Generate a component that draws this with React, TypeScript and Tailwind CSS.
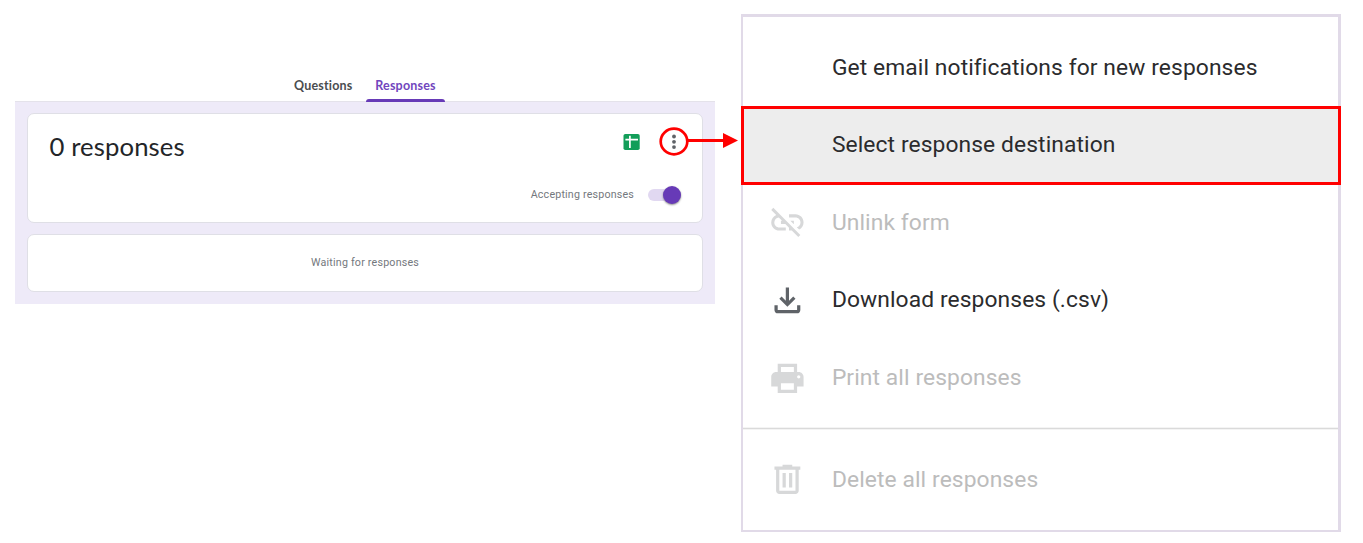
import type { ReactNode } from "react";

const icons = {
  unlink:
    "M17 7h-4v1.9h4c1.71 0 3.1 1.39 3.1 3.1 0 1.43-.98 2.63-2.31 2.98l1.46 1.46C20.88 15.61 22 13.95 22 12c0-2.76-2.24-5-5-5zm-1 4h-2.19l2 2H16v-2zM2 4.27l3.11 3.11C3.29 8.12 2 9.91 2 12c0 2.76 2.24 5 5 5h4v-1.9H7c-1.71 0-3.1-1.39-3.1-3.1 0-1.59 1.21-2.9 2.76-3.07L8.73 11H8v2h2.73L13 15.27V17h1.73l4.01 4L20 19.74 3.27 3 2 4.27z",
  download:
    "M12 16l-5-5 1.4-1.45 2.6 2.6V4h2v8.15l2.6-2.6L17 11zM6 20q-.825 0-1.412-.587T4 18v-3h2v3h12v-3h2v3q0 .825-.587 1.413T18 20z",
  print:
    "M19 8h-1V3H6v5H5c-1.66 0-3 1.34-3 3v6h4v4h12v-4h4v-6c0-1.66-1.34-3-3-3zM8 5h8v3H8V5zm8 14H8v-4h8v4zm3-7c-.55 0-1-.45-1-1s.45-1 1-1 1 .45 1 1-.45 1-1 1z",
  trash:
    "M15 4V3H9v1H4v2h1v13c0 1.1.9 2 2 2h10c1.1 0 2-.9 2-2V6h1V4h-5zm2 15H7V6h10v13zM9 8h2v9H9zm4 0h2v9h-2z",
};

function MenuItem({ icon, disabled, children }: { icon?: keyof typeof icons; disabled?: boolean; children: ReactNode }) {
  return (
    <div className={`flex h-[77.6px] shrink-0 items-center pl-[24.6px] ${disabled ? "text-[#bcbcbc]" : "text-[#2b2b2d]"}`}>
      <svg viewBox="0 0 24 24" className={`h-[38.8px] w-[38.8px] shrink-0 ${disabled ? "fill-[#d7d8d9]" : "fill-[#5f6368]"}`}>
        {icon && <path fillRule="evenodd" d={icons[icon]} />}
      </svg>
      <span className="ml-[25.5px] whitespace-nowrap text-[22.8px] tracking-[0.1px]">{children}</span>
    </div>
  );
}

function FormPanel() {
  return (
    <section className="mt-[69px] w-[700px] shrink-0">
      <nav className="flex h-[31px] pl-[279px] font-['Lato',sans-serif] text-[12.5px] font-bold leading-[31px] tracking-[0.18px]">
        <span className="mr-[13px] w-[59px] whitespace-nowrap text-[#4a4d50]">Questions</span>
        <span className="relative w-[79px] text-center text-[#7146bd]">
          Responses
          <span className="absolute inset-x-0 top-[29px] h-[3px] rounded-t-[3px] bg-[#673ab7]" />
        </span>
      </nav>
      <div className="h-[203px] border-t border-[#e4e2ea] bg-[#eeeaf8] px-3 pt-[11px]">
        <div className="flex h-[110px] flex-col rounded-[7px] border border-[#dfdfe6] bg-white pl-[21.5px] pr-[21px]">
          <div className="flex h-[66px] items-center justify-between">
            <h1 className="mb-[2px] font-['Lato',sans-serif] text-[25.7px] tracking-[0.1px] text-[#232528]">0 responses</h1>
            <div className="relative -mr-[8px] mb-[10px] flex items-center gap-[19px]">
              <svg className="h-[17px] w-[17px]" viewBox="0 0 17 17">
                <rect x="0.5" y="0" width="16.2" height="16" rx="1.8" fill="#129e59" />
                <path d="M2.4 5.7h12.6M6.9 1.7v12.4" stroke="#fff" strokeWidth="1.7" />
              </svg>
              <svg className="h-[30px] w-[30px]" viewBox="0 0 30 30">
                <ellipse cx="15" cy="14.5" rx="13.3" ry="12.8" fill="none" stroke="#f00" strokeWidth="2.7" />
                <g fill="#5f6368">
                  <circle cx="15" cy="9.5" r="1.9" />
                  <circle cx="15" cy="14.8" r="1.9" />
                  <circle cx="15" cy="20.1" r="1.9" />
                </g>
              </svg>
              <svg className="absolute left-[63px] top-[6px] h-[16px] w-[52px]" viewBox="0 0 52 16">
                <path d="M0 7.5h39" stroke="#f00" strokeWidth="2.8" />
                <path d="M37 0v15L52 7.5z" fill="#f00" />
              </svg>
            </div>
          </div>
          <div className="flex h-[30px] items-center justify-end text-[10.7px] tracking-[0.18px] text-[#74787d]">
            Accepting responses
            <span className="ml-[14px] flex h-3 w-[33px] items-center justify-end rounded-full bg-[#e1d8f1]">
              <span className="h-[18px] w-[18px] shrink-0 rounded-full bg-[#673ab7] shadow-[0_1px_2px_rgba(0,0,0,0.45)]" />
            </span>
          </div>
        </div>
        <div className="mt-[11px] flex h-[58px] items-center justify-center rounded-[7px] border border-[#dfdfe6] bg-white text-[10.7px] tracking-[0.2px] text-[#74787d]">
          Waiting for responses
        </div>
      </div>
    </section>
  );
}

export default function App() {
  return (
    <main className="flex h-[543px] w-[1363px] items-start bg-white pl-[15px] pt-px font-['Roboto',sans-serif]">
      <FormPanel />
      <section className="ml-[26px] mt-[13px] flex h-[518px] w-[600px] shrink-0 flex-col border-b-2 border-l-2 border-r-[3px] border-t-[3px] border-[#e1dae8] bg-white pt-[12px]">
        <div className="h-[77px] shrink-0">
          <MenuItem>Get email notifications for new responses</MenuItem>
        </div>
        <div className="-mb-px -ml-[2px] -mr-[3px] flex h-[79px] shrink-0 items-center border-[3px] border-[#f00] bg-[#ededed]">
          <div className="-ml-px">
            <MenuItem>Select response destination</MenuItem>
          </div>
        </div>
        <MenuItem icon="unlink" disabled>Unlink form</MenuItem>
        <MenuItem icon="download">Download responses (.csv)</MenuItem>
        <MenuItem icon="print" disabled>Print all responses</MenuItem>
        <hr className="mb-[11px] mt-[10.2px] h-[3px] shrink-0 border-y border-[#f4f4f4] bg-[#dadada]" />
        <MenuItem icon="trash" disabled>Delete all responses</MenuItem>
      </section>
    </main>
  );
}
